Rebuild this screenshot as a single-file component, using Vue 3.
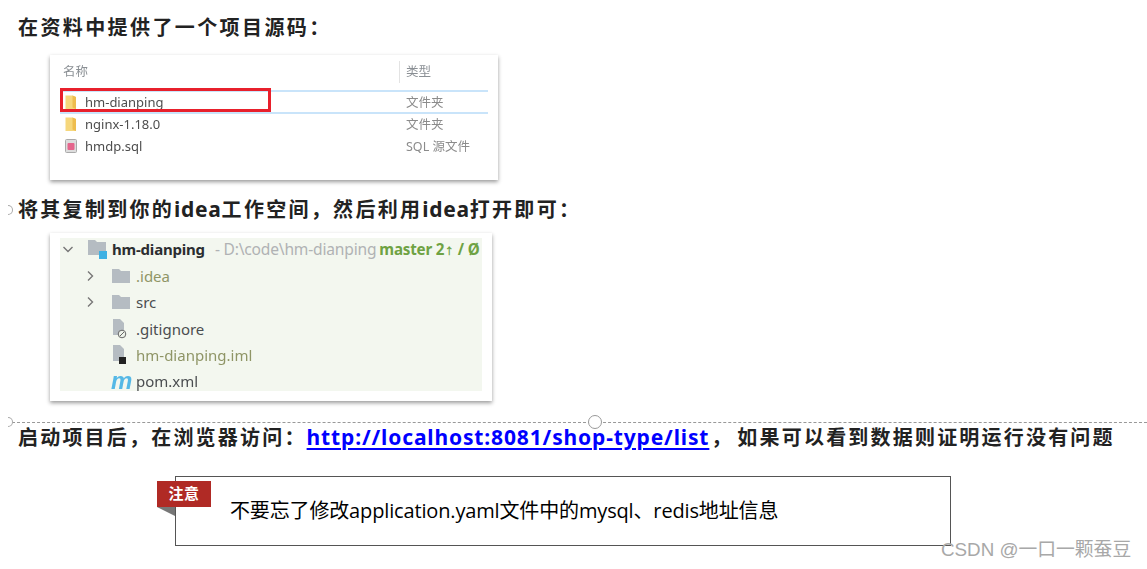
<script setup>
const files = [
  { name: 'hm-dianping', type: '文件夹', icon: 'folder' },
  { name: 'nginx-1.18.0', type: '文件夹', icon: 'folder' },
  { name: 'hmdp.sql', type: 'SQL 源文件', icon: 'sql' }
]
</script>

<template>
  <div class="page">
    <h2 class="head first">在资料中提供了一个项目源码：</h2>

    <div class="shot explorer">
      <div class="ex-head">
        <span class="ex-name">名称</span>
        <span class="ex-type with-divider">类型</span>
      </div>
      <div class="ex-list">
        <div v-for="(f, i) in files" :key="f.name" class="ex-row" :class="{ selected: i === 0 }">
          <svg class="ex-icon" viewBox="0 0 14 14" width="14" height="14">
            <template v-if="f.icon === 'folder'">
              <path d="M1.5 0.5h7l3.5 1.5v12H1.5z" fill="#f6d77c" />
              <path d="M8.5 0.5l3.5 1.5v12l-3.5-1.5z" fill="#eebd4e" />
            </template>
            <template v-else>
              <rect x="1.5" y="0.5" width="11" height="13" rx="1" fill="#ddd" stroke="#aaa" />
              <rect x="3.5" y="4" width="7" height="7" rx="1" fill="#e5658c" />
            </template>
          </svg>
          <span class="ex-file">{{ f.name }}</span>
          <span class="ex-type">{{ f.type }}</span>
        </div>
        <div class="red-box"></div>
      </div>
    </div>

    <h2 class="head second">
      <span class="handle half left-a"></span>将其复制到你的<span class="lat">idea</span>工作空间，然后利用<span class="lat">idea</span>打开即可：
    </h2>

    <div class="shot project">
      <div class="tint">
        <div class="tree-row root">
          <svg class="chev" viewBox="0 0 12 12" width="12" height="12"><path d="M1.5 4l4.5 4.5L10.5 4" fill="none" stroke="#777" stroke-width="1.4" /></svg>
          <svg class="root-icon" viewBox="0 0 20 20" width="20" height="20">
            <path d="M0 1h7l2 2h9v13H0z" fill="#b5bcc2" />
            <rect x="11" y="12" width="8" height="8" fill="#3fb1e3" />
          </svg>
          <b class="root-name">hm-dianping</b>
          <span class="root-path">- D:\code\hm-dianping</span>
          <b class="root-git">master 2<small>↑</small> / Ø</b>
        </div>
        <div class="tree-row lvl1">
          <svg class="chev" viewBox="0 0 12 12" width="12" height="12"><path d="M4 1.5L8.5 6 4 10.5" fill="none" stroke="#777" stroke-width="1.4" /></svg>
          <svg class="f-icon" viewBox="0 0 18 14" width="18" height="14"><path d="M0 0h7l2 2h9v12H0z" fill="#b5bcc2" /></svg>
          <span class="olive">.idea</span>
        </div>
        <div class="tree-row lvl1">
          <svg class="chev" viewBox="0 0 12 12" width="12" height="12"><path d="M4 1.5L8.5 6 4 10.5" fill="none" stroke="#777" stroke-width="1.4" /></svg>
          <svg class="f-icon" viewBox="0 0 18 14" width="18" height="14"><path d="M0 0h7l2 2h9v12H0z" fill="#b5bcc2" /></svg>
          <span>src</span>
        </div>
        <div class="tree-row lvl2">
          <svg class="file-icon" viewBox="0 0 16 20" width="16" height="20">
            <path d="M2 0h7l4 4v12H2z" fill="#b5bcc2" />
            <circle cx="11" cy="15" r="3.8" fill="#eef3ea" stroke="#666" />
            <path d="M9 17l4-4" stroke="#666" />
          </svg>
          <span>.gitignore</span>
        </div>
        <div class="tree-row lvl2">
          <svg class="file-icon" viewBox="0 0 16 20" width="16" height="20">
            <path d="M2 0h7l4 4v12H2z" fill="#b5bcc2" />
            <rect x="8" y="12" width="7" height="7" fill="#222" />
          </svg>
          <span class="olive">hm-dianping.iml</span>
        </div>
        <div class="tree-row lvl2">
          <span class="maven">m</span>
          <span>pom.xml</span>
        </div>
      </div>
    </div>

    <div class="rule">
      <span class="handle half left-b"></span>
      <span class="handle full"></span>
    </div>

    <h2 class="head third">
      启动项目后，在浏览器访问：<a class="link" href="#">http://localhost:8081/shop-type/list</a><span class="comma">，</span>如果可以看到数据则证明运行没有问题
    </h2>

    <div class="note">
      <div class="tag">注意</div>
      <span class="fold"></span>
      <p class="note-text">不要忘了修改application.yaml文件中的mysql、redis地址信息</p>
    </div>

    <div class="mark">CSDN @一口一颗蚕豆</div>
  </div>
</template>

<style>
html, body { margin: 0; background: #fff; overflow: hidden; }
</style>

<style scoped>
.page {
  position: relative;
  width: 1147px;
  height: 569px;
  overflow: hidden;
  background: #fff;
  font-family: "Noto Sans", "Noto Sans CJK SC", sans-serif;
}
.head {
  margin: 0 0 0 18px;
  font-family: "Noto Sans", "Noto Sans CJK SC", sans-serif;
  font-size: 20px;
  font-weight: 700;
  line-height: 28px;
  letter-spacing: 2.4px;
  color: #222;
  white-space: nowrap;
  position: relative;
}
.first { padding-top: 14px; }
.second { margin-top: 16px; letter-spacing: 2.3px; }
.lat { font-size: 21px; line-height: 1; letter-spacing: 0.7px; }
.third { margin-top: 1px; letter-spacing: 2.2px; }
.comma { margin-left: 2px; letter-spacing: 6px; }
.link {
  color: #00f;
  text-decoration: underline;
  text-decoration-thickness: 2px;
  text-underline-offset: 3px;
  letter-spacing: 0.86px;
  font-size: 21px;
  line-height: 1;
  font-family: "Noto Sans", sans-serif;
}

.shot {
  margin-left: 50px;
  background: #fff;
  box-shadow: 0 2px 4px rgba(0, 0, 0, 0.4);
  box-sizing: border-box;
}
.explorer {
  margin-top: 13px;
  width: 448px;
  height: 125px;
  padding: 6px 10px 0 10px;
  font-size: 12.5px;
  color: #666;
}
.ex-head {
  display: flex;
  justify-content: space-between;
  height: 24px;
  line-height: 22px;
  color: #8a8f94;
  font-size: 12.5px;
  filter: blur(0.6px);
  padding-left: 3px;
  position: relative;
}
.ex-name { flex: 1; }
.ex-type { width: 82px; flex: none; }
.with-divider {
  border-left: 1px solid #e3e3e3;
  padding-left: 6px;
  width: 89px;
  box-sizing: border-box;
  height: 22px;
}
.ex-list { position: relative; padding-top: 5px; }
.ex-row {
  display: flex;
  align-items: center;
  height: 22px;
  width: 428px;
  box-sizing: border-box;
  padding-left: 4px;
  filter: blur(0.6px);
}
.selected {
  border-top: 2px solid #c9e4fa;
  border-bottom: 2px solid #c9e4fa;
  height: 24px;
  margin-bottom: -1px;
}
.ex-icon { margin-right: 7px; flex: none; }
.ex-file { flex: 1; color: #4d4d4d; font-size: 13px; }
.ex-row .ex-type { width: 82px; color: #8b8b8b; font-size: 12.5px; margin-top: -2px; }
.red-box {
  position: absolute;
  left: 0;
  top: 3px;
  width: 211px;
  height: 24px;
  border: 3px solid #e8202c;
  box-sizing: border-box;
}

.project {
  margin-top: 9px;
  width: 442px;
  height: 168px;
  padding: 5px 10px 10px;
}
.tint {
  height: 153px;
  background: #f3f7ef;
  font-size: 15px;
  color: #4a4d50;
  filter: blur(0.55px);
}
.tree-row {
  display: flex;
  align-items: center;
  height: 26.2px;
  white-space: nowrap;
  box-sizing: border-box;
}
.root { letter-spacing: -0.2px; height: 25.2px; padding-bottom: 3px; }
.chev { flex: none; margin-left: 2px; margin-right: 14px; }
.root .chev { margin-right: 14px; }
.lvl1 { padding-left: 24px; }
.lvl1 .chev { margin: 0 16px 0 0; }
.f-icon { margin-right: 6px; flex: none; }
.root-icon { flex: none; margin-right: 4px; }
.root-name { color: #2b2d30; }
.root-path { color: #b0b2b4; margin-left: 10px; font-size: 15.6px; letter-spacing: -0.2px; }
.root-git { color: #6ea243; font-size: 15.2px; margin-left: 3px; }
.root-git small { font-size: 10px; }
.olive { color: #8f9566; }
.lvl2 { padding-left: 51px; }
.file-icon { flex: none; margin-right: 9px; }
.maven {
  width: 25px;
  flex: none;
  color: #55b8e6;
  font: italic 700 24px/1 "Liberation Sans", sans-serif;
}

.rule {
  position: relative;
  margin: 21px 0 0 12px;
  border-top: 1px dashed #999;
  height: 0;
}
.handle {
  position: absolute;
  box-sizing: border-box;
  border: 1px solid #999;
  border-radius: 50%;
  background: #fff;
}
.full { left: 576px; top: -8px; width: 14px; height: 14px; }
.half {
  width: 5px;
  height: 10px;
  border-left: 0;
  border-color: #aaa;
  border-radius: 0 5px 5px 0;
}
.left-a { left: -10px; top: 9px; }
.left-b { left: -4px; top: -6px; }

.note {
  position: relative;
  box-sizing: border-box;
  margin: 24px 0 0 175px;
  width: 776px;
  height: 70px;
  border: 1px solid #555;
  display: flex;
  align-items: center;
  padding-left: 54px;
}
.tag {
  position: absolute;
  left: -19px;
  top: 4px;
  width: 54px;
  height: 26px;
  background: #b02a25;
  color: #fff;
  font-size: 15px;
  font-weight: 700;
  line-height: 24px;
  text-align: center;
  letter-spacing: 0.5px;
}
.fold {
  position: absolute;
  left: -19px;
  top: 30px;
  width: 0;
  height: 0;
  border-top: 9px solid #777;
  border-left: 18px solid transparent;
}
.note-text {
  margin: -4px 0 0;
  font-family: "Open Sans", "Noto Sans CJK SC", sans-serif;
  font-size: 20px;
  letter-spacing: -0.15px;
  color: #000;
  white-space: nowrap;
}

.mark {
  position: absolute;
  left: 941px;
  top: 536px;
  font-size: 18.8px;
  line-height: 28px;
  color: #a8a8a8;
  white-space: nowrap;
  font-family: "Liberation Sans", "Noto Sans CJK SC", sans-serif;
}
</style>
